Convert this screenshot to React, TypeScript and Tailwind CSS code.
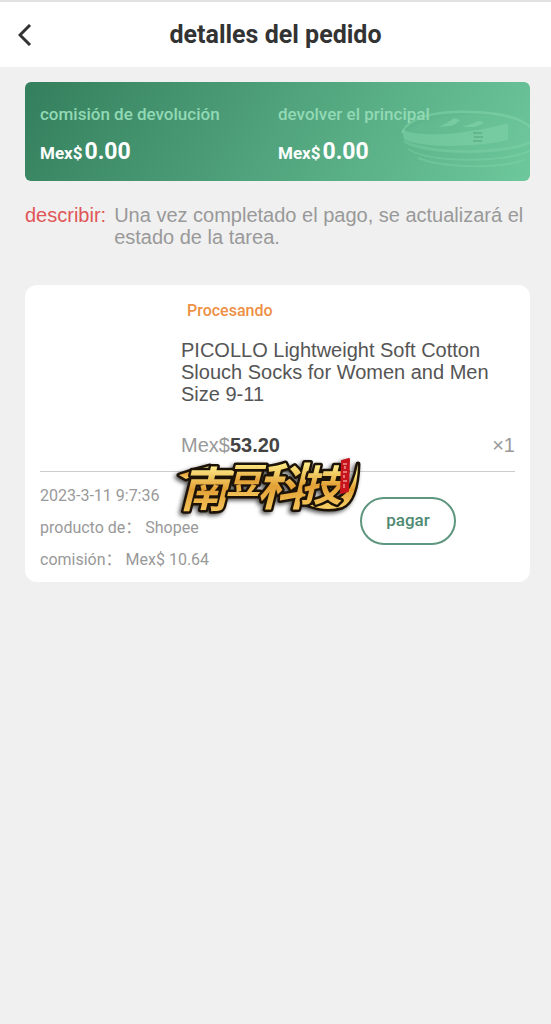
import { useId } from 'react'

const totals = [
  { label: 'comisión de devolución', amount: '0.00' },
  { label: 'devolver el principal', amount: '0.00' },
]

const details = [
  { label: 'producto de：', value: 'Shopee' },
  { label: 'comisión：', value: 'Mex$ 10.64' },
]

// Stack of coins on the right of the banner
function Coins() {
  return (
    <svg viewBox="0 0 130 60" className="absolute right-0 bottom-3 h-[60px] w-[130px]" fill="none" aria-hidden="true">
      <path d="M2 26C8 44 100 52 130 30V22C110 -4 14 4 2 26Z" fill="#8ad9b0" opacity="0.08" />
      <path d="M2 24C10 4 50 2 72 3C102 4 122 10 130 18" stroke="#8ad9b0" strokeWidth="2.5" opacity="0.45" />
      <path d="M2 20C6 25 40 28 70 22C88 19 100 17 108 14V31C80 38 20 40 4 30Z" fill="#8ad9b0" opacity="0.4" />
      <path d="M38 18Q48 14 54 9L60 11Q56 16 50 17ZM62 18Q72 15 78 12L84 13Q80 17 74 18Z" fill="#8ad9b0" opacity="0.5" />
      <path d="M4 32C24 46 106 46 130 33" stroke="#8ad9b0" strokeWidth="3" opacity="0.3" />
      <path d="M8 40C30 54 104 54 130 42M18 49C46 60 104 59 124 51" stroke="#8ad9b0" strokeWidth="2" opacity="0.3" />
      <path d="M73 24H82M74 28H83M73 32H82" stroke="#4d9e79" strokeWidth="2" opacity="0.45" />
    </svg>
  )
}

function Watermark() {
  const gold = useId()

  return (
    <svg
      viewBox="0 0 190 70"
      className="pointer-events-none absolute top-[166px] left-[149px] h-[70px] w-[190px] drop-shadow-[-2px_2px_2px_#000a]"
      role="img"
      aria-label="南豆科技"
    >
      <defs>
        <linearGradient id={gold} x1="0" y1="0" x2="0" y2="1">
          <stop offset="0.2" stopColor="#fff08c" />
          <stop offset="0.55" stopColor="#e3a035" />
          <stop offset="0.95" stopColor="#f8cd62" />
        </linearGradient>
      </defs>
      <g
        fill={`url(#${gold})`}
        stroke="#1c1206"
        strokeWidth="5"
        strokeLinejoin="round"
        paintOrder="stroke"
        className="font-['Noto_Sans_CJK_SC',sans-serif] font-bold italic"
      >
        <path d="M5 24Q20 19 36 15L40 19Q22 23 12 28Z" />
        <path d="M134 54Q160 54 172 42Q180 34 184 13Q183 50 168 56Q152 61 134 54Z" />
        <text x="6" y="56" fontSize="48">南</text>
        <text x="52" y="43" fontSize="36">豆</text>
        <text x="83" y="54" fontSize="50">科</text>
        <text x="126" y="50" fontSize="42">技</text>
      </g>
      <path d="M168 10L175 8L174 40L167 42Z" fill="#c8141c" stroke="#c8141c" strokeWidth="2" strokeLinejoin="round" />
      <path d="M169 13H173M171 15V18M169 21H173M170 24V27M169 30H173M170 33V37" stroke="#ffd9d0" />
    </svg>
  )
}

export default function App() {
  return (
    <div className="min-h-screen bg-[#f0f0f0] font-['Liberation_Sans',Arial,sans-serif] text-[#333]">
      <header className="relative flex h-[67px] items-center justify-center border-t-2 border-[#e2e2e2] bg-white">
        <button type="button" aria-label="Volver" className="absolute left-4 p-0.5">
          <svg viewBox="0 0 14 22" className="h-[22px] w-3.5" fill="none" stroke="#333" strokeWidth="3" aria-hidden="true">
            <path d="M12 1L2 11L12 21" />
          </svg>
        </button>
        <h1 className="font-['Roboto',sans-serif] text-[25px] leading-8 font-bold">detalles del pedido</h1>
      </header>

      <main className="pt-[15px] pr-[21px] pl-[25px]">
        <section className="relative grid h-[99px] grid-cols-[238px_1fr] overflow-hidden rounded-md bg-[linear-gradient(120deg,#347f5d,#6dc89c)] pt-5 pl-[15px] font-['Roboto',sans-serif]">
          <Coins />
          {totals.map((total) => (
            <div key={total.label} className="relative">
              <p className="text-[17px] leading-6 font-medium text-[#92d9b5]">{total.label}</p>
              <p className="mt-3 flex items-baseline gap-0.5 leading-7 font-bold text-white">
                <span className="text-[17px]">Mex$</span>
                <span className="text-[23px] leading-7">{total.amount}</span>
              </p>
            </div>
          ))}
        </section>

        <section className="mt-[23px] flex gap-2 text-xl leading-[22px]">
          <span className="text-[#e05656]">describir:</span>
          <p className="text-[#999]">Una vez completado el pago, se actualizará el estado de la tarea.</p>
        </section>

        <article className="relative mt-[37px] rounded-xl bg-white px-[15px] pt-3.5 pb-1.5">
          <div className="pl-[141px]">
            <p className="pl-1.5 font-['Roboto',sans-serif] text-base leading-6 font-medium text-[#ee9044]">Procesando</p>
            <h2 className="mt-4 max-w-[320px] text-xl leading-[22px] text-[#555]">
              PICOLLO Lightweight Soft Cotton Slouch Socks for Women and Men Size 9-11
            </h2>
            <div className="mt-7 flex justify-between text-xl leading-6 text-[#999]">
              <p>
                Mex$<span className="font-bold text-[#444]">53.20</span>
              </p>
              <span>×1</span>
            </div>
          </div>

          <div className="mt-3.5 flex justify-between border-t border-[#ccc] pt-2">
            <div className="font-['Roboto','Noto_Sans_CJK_SC',sans-serif] text-base leading-8 text-[#999]">
              <p>2023-3-11 9:7:36</p>
              {details.map((detail) => (
                <p key={detail.label} className="flex gap-1">
                  <span>{detail.label}</span>
                  <span>{detail.value}</span>
                </p>
              ))}
            </div>
            <button
              type="button"
              className="mt-[17px] mr-[59px] h-12 w-24 rounded-full border-2 border-[#5e967f] font-['Roboto',sans-serif] text-[17px] font-medium text-[#4f8a72]"
            >
              pagar
            </button>
          </div>

          <Watermark />
        </article>
      </main>
    </div>
  )
}
